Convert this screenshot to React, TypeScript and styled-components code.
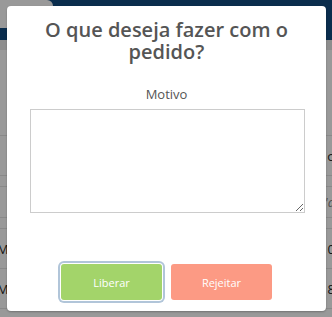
import styled, { createGlobalStyle } from "styled-components";

const GlobalStyle = createGlobalStyle`
    html, body {
        margin: 0;
        padding: 0;
        background: #ffffff;
        font-family: "Open Sans", "Liberation Sans", sans-serif;
    }
`;

const Page = styled.div`
    position: relative;
    width: 332px;
    height: 317px;
    overflow: hidden;
    background: #ffffff;
`;

const Header = styled.div`
    display: flex;
    height: 40px;
    background: #124c80;
`;

const LogoTab = styled.div`
    width: 53px;
    height: 28px;
    background: #ffffff;
    border-top-right-radius: 6px;
`;

const SubBar = styled.div`
    height: 10px;
    background: #ececec;
`;

const Content = styled.div`
    height: 85px;
`;

const Row = styled.div<{ h: number }>`
    display: flex;
    justify-content: space-between;
    align-items: center;
    height: ${(p) => p.h}px;
    border-top: 1px solid #e4e4e4;
    box-sizing: border-box;
    margin: 0 -3px;
    font-size: 13px;
    color: #222;
`;

const Cell = styled.span<{ muted?: boolean }>`
    color: ${(p) => (p.muted ? "#888" : "#222")};
    font-style: ${(p) => (p.muted ? "italic" : "normal")};
`;

const Overlay = styled.div`
    position: absolute;
    inset: 0;
    display: flex;
    padding: 6px 6px 6px 7px;
    background: rgba(0, 0, 0, 0.4);
`;

const Modal = styled.div`
    flex: 1;
    display: flex;
    flex-direction: column;
    align-items: center;
    background: #ffffff;
    border-radius: 4px;
    box-shadow: 0 1px 2px rgba(0, 0, 0, 0.25);
`;

const Title = styled.h2`
    margin: 13px 0 0 0;
    max-width: 260px;
    font-size: 20px;
    line-height: 22px;
    font-weight: 600;
    color: #555555;
    text-align: center;
`;

const Label = styled.label`
    margin-top: 22px;
    font-size: 13px;
    line-height: 18px;
    color: #555555;
`;

const TextArea = styled.textarea`
    align-self: stretch;
    margin: 6px 21px 0 23px;
    height: 104px;
    box-sizing: border-box;
    border: 1px solid #cccccc;
    border-radius: 0;
    outline: none;
    resize: both;
`;

const Actions = styled.div`
    display: flex;
    gap: 9px;
    margin-top: 51px;
`;

const Button = styled.button<{ variant: "ok" | "no"; focused?: boolean }>`
    width: 101px;
    height: 36px;
    border: none;
    border-radius: 3px;
    font-family: "Open Sans", "Liberation Sans", sans-serif;
    font-size: 11px;
    color: #ffffff;
    cursor: pointer;
    background: ${(p) => (p.variant === "ok" ? "#a3d46a" : "#fc9a84")};
    box-shadow: ${(p) =>
        p.focused ? "0 0 0 1px #ffffff, 0 0 0 3px #b1c5d9" : "none"};
`;

export default function App() {
    return (
        <Page>
            <GlobalStyle />
            <Header>
                <LogoTab />
            </Header>
            <SubBar />
            <Content />
            <Row h={40}>
                <Cell />
                <Cell>o</Cell>
            </Row>
            <Row h={11} />
            <Row h={31}>
                <Cell />
                <Cell muted>'a</Cell>
            </Row>
            <Row h={11} />
            <Row h={40}>
                <Cell>M</Cell>
                <Cell>0</Cell>
            </Row>
            <Row h={40}>
                <Cell>M</Cell>
                <Cell>8</Cell>
            </Row>
            <Row h={20} />
            <Overlay>
                <Modal>
                    <Title>O que deseja fazer com o pedido?</Title>
                    <Label>Motivo</Label>
                    <TextArea />
                    <Actions>
                        <Button variant="ok" focused>Liberar</Button>
                        <Button variant="no">Rejeitar</Button>
                    </Actions>
                </Modal>
            </Overlay>
        </Page>
    );
}
